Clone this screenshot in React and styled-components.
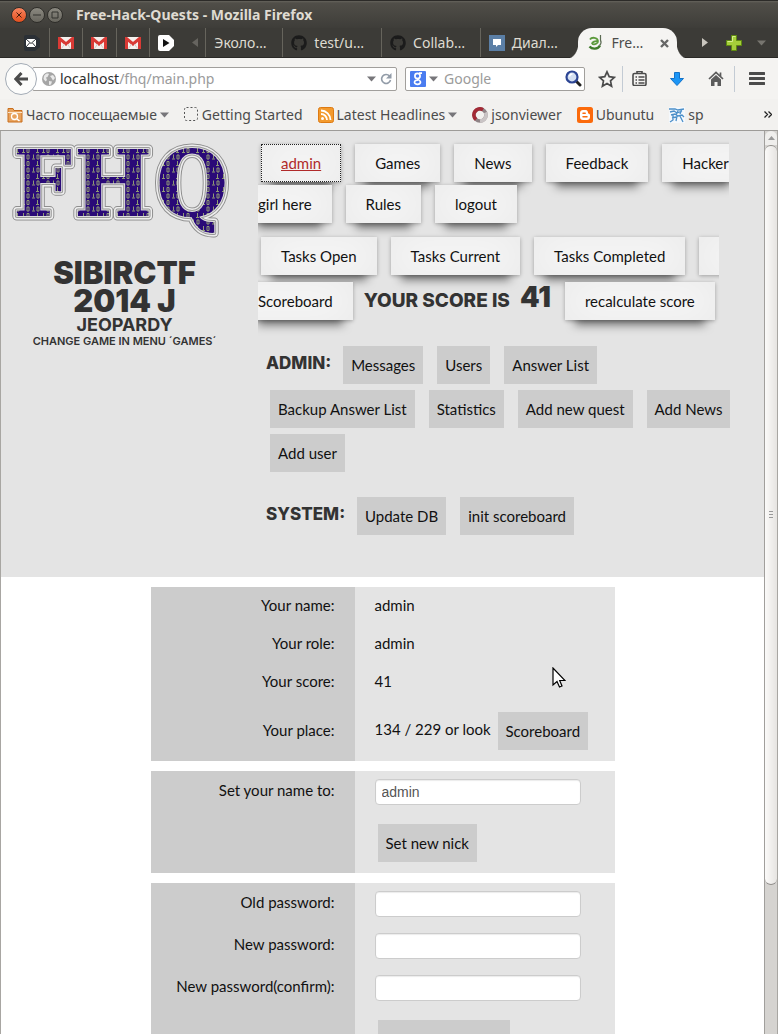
import React from "react";
import styled, { createGlobalStyle, css } from "styled-components";
import { FaGithub } from "react-icons/fa";

const uiFont = '"Noto Sans", "Open Sans", sans-serif';
const bodyFont = 'Lato, "Open Sans", sans-serif';
const displayFont = "Inter, sans-serif";

const GlobalStyle = createGlobalStyle`
  *, *::before, *::after { box-sizing: border-box; }
  body { margin: 0; overflow: hidden; background: #3c3b37; }
  button, input { font: inherit; }
`;

/* ---------- window frame ---------- */

const Window = styled.div`
  height: 100vh;
  display: flex;
  flex-direction: column;
  border-top: 1px solid #2c2b28;
  font: 14px/18px ${uiFont};
  color: #3c3c3c;
`;

const TitleBar = styled.header`
  flex: none;
  height: 27px;
  display: flex;
  align-items: center;
  gap: 2px;
  padding-left: 11px;
  background: linear-gradient(#65635c, #504e48 2px, #3e3d39);
`;

const Title = styled.h1`
  margin: 0 0 0 11px;
  font: bold 14px/18px ${uiFont};
  color: #dfdbd2;
`;

const WindowButton = styled.button`
  width: 16px;
  height: 16px;
  padding: 0;
  display: grid;
  place-items: center;
  border: 1px solid #2f2e2a;
  border-radius: 50%;
  background: ${(p) => (p.$close ? "linear-gradient(#f98560, #e3501f)" : "linear-gradient(#8b8980, #68665e)")};
`;

const TabStrip = styled.nav`
  flex: none;
  height: 30px;
  display: flex;
  padding-left: 16px;
  background: #3c3b37;
  border-bottom: 1px solid #2a2926;
`;

const PinnedTab = styled.button`
  width: 34px;
  padding: 0;
  display: grid;
  place-items: center;
  border: 0;
  border-right: 1px solid ${(p) => (p.$last ? "transparent" : "#66645c")};
  background: none;
`;

const StripButton = styled.button`
  width: ${(p) => p.$width}px;
  padding: 0;
  display: grid;
  place-items: center;
  border: 0;
  background: none;
`;

const Tab = styled.button`
  width: ${(p) => (p.$plain ? 78 : 100)}px;
  padding: 0 0 0 8px;
  display: flex;
  align-items: center;
  gap: 7px;
  border: 0;
  border-left: 1px solid #66645c;
  background: none;
  color: #dfdbd2;
  white-space: nowrap;
`;

const ActiveTab = styled.button`
  position: relative;
  width: 100px;
  height: 30px;
  margin: 0 10px 0 0;
  padding: 0 8px 0 10px;
  display: flex;
  align-items: center;
  gap: 7px;
  border: 0;
  border-radius: 14px 14px 0 0;
  background: #f5f4f2;
  color: #4c4c4c;
  &::before, &::after {
    content: "";
    position: absolute;
    bottom: 0;
    width: 11px;
    height: 16px;
  }
  &::before { right: 100%; background: radial-gradient(ellipse at 0 0, transparent 11px, #f5f4f2 12px); }
  &::after { left: 100%; background: radial-gradient(ellipse at 100% 0, transparent 11px, #f5f4f2 12px); }
  svg:last-child { margin-left: auto; }
`;

const Toolbar = styled.div`
  flex: none;
  height: 41px;
  display: flex;
  align-items: center;
  padding-left: 5px;
  background: #f4f3f1;
`;

const BackButton = styled.button`
  position: relative;
  flex: none;
  width: 32px;
  height: 32px;
  padding: 0;
  display: grid;
  place-items: center;
  border: 1px solid #a3abb5;
  border-radius: 50%;
  background: #fcfcfb;
`;

const Field = styled.div`
  height: 24px;
  display: flex;
  align-items: center;
  border: 1px solid #a19f9c;
  border-radius: 2px;
  background: #fff;
`;

const UrlField = styled(Field)`
  flex: 1;
  min-width: 0;
  margin: 0 8px 0 -5px;
  padding: 0 4px 0 9px;
  gap: 4px;
`;

const UrlText = styled.span`
  flex: 1;
  color: #9b9b9b;
  white-space: nowrap;
  b { font-weight: 400; color: #2e2e2e; }
`;

const SearchField = styled(Field)`
  flex: none;
  width: 180px;
  margin-right: 6px;
  padding: 0 2px 0 4px;
  gap: 3px;
  input {
    flex: 1;
    min-width: 0;
    padding: 0 3px;
    border: 0;
    outline: 0;
    background: none;
    &::placeholder { color: #9b9b9b; opacity: 1; }
  }
`;

const ToolButton = styled.button`
  flex: none;
  width: ${(p) => p.$width}px;
  height: 26px;
  padding: 0;
  display: grid;
  place-items: center;
  border: 0;
  border-left: 1px solid ${(p) => (p.$divided ? "#c3cbd4" : "transparent")};
  background: none;
`;

const Bookmarks = styled.nav`
  flex: none;
  height: 32px;
  display: flex;
  align-items: center;
  gap: 15px;
  padding: 0 6px 0 7px;
  background: #f2f1ef;
  border-bottom: 1px solid #9d9b98;
`;

const Bookmark = styled.a`
  display: flex;
  align-items: center;
  gap: 3px;
  color: #4c4c4c;
  text-decoration: none;
  white-space: nowrap;
  svg { flex: none; }
`;

const More = styled.button`
  margin-left: auto;
  padding: 0;
  display: grid;
  border: 0;
  background: none;
`;

/* ---------- viewport ---------- */

const Viewport = styled.div`
  position: relative;
  flex: 1;
  min-height: 0;
  display: flex;
  border: solid #a8a6a2;
  border-width: 0 1px;
`;

const Page = styled.main`
  flex: 1;
  min-width: 0;
  overflow: hidden;
  background: #fff;
  font: 15px/18px ${bodyFont};
  color: #111;
`;

const ScrollTrack = styled.div`
  flex: none;
  width: 13px;
  display: flex;
  flex-direction: column;
  background: #d5d3d0;
  border-left: 1px solid #a19f9c;
`;

const ScrollUp = styled.button`
  height: 14px;
  padding: 0;
  display: grid;
  place-items: center;
  border: 0;
  border-radius: 6px 6px 0 0;
  background: #efeeec;
`;

const ScrollThumb = styled.div`
  height: 82%;
  display: grid;
  place-items: center;
  border: solid #8f8d8a;
  border-width: 1px 0;
  border-radius: 6px;
  background: linear-gradient(90deg, #fbfaf9, #e6e4e1);
`;

const Header = styled.header`
  display: flex;
  min-height: 446px;
  background: #e4e4e4;
`;

const Brand = styled.section`
  flex: none;
  width: 257px;
  padding: 8px 15px 0 5px;
  text-align: center;
  color: #333;
  svg { display: block; margin: 0 0 20px 3px; }
`;

const GameName = styled.h2`
  margin: 0 30px;
  font: 900 31px/28px ${displayFont};
`;

const GameType = styled.p`
  margin: 0;
  font: 700 18px/20px ${displayFont};
`;

const GameHint = styled.p`
  margin: 0;
  font: 600 11px/12px ${displayFont};
`;

const Menus = styled.div`
  flex: 1;
  min-width: 0;
  padding-right: 18px;
`;

const MenuLines = styled.nav`
  padding-top: ${(p) => p.$top}px;
  line-height: ${(p) => p.$pitch}px;
  white-space: nowrap;
`;

const raised = css`
  background: #f8f8f8;
  box-shadow:
    0 15px 10px -10px rgba(0, 0, 0, 0.5),
    0 1px 4px rgba(0, 0, 0, 0.3),
    inset 0 0 40px rgba(0, 0, 0, 0.06);
`;

const MenuLink = styled.a`
  margin: 0 11px 0 3px;
  padding: 10px 20px;
  color: #111;
  text-decoration: none;
  ${raised}
  ${(p) =>
    p.$current &&
    css`
      color: #b02a2a;
      text-decoration: underline;
      outline: 1px dotted #222;
      outline-offset: -1px;
    `}
`;

const Score = styled.span`
  margin-right: 11px;
  font: 800 19px/20px ${displayFont};
  color: #333;
  b { margin-left: 6px; font-size: 28px; font-weight: 900; }
`;

const ToolGroup = styled.section`
  padding: ${(p) => p.$top}px 0 0 8px;
`;

const GroupTitle = styled.h3`
  display: inline-block;
  margin: 0 4px 0 0;
  font: 800 17px/20px ${displayFont};
  color: #333;
`;

const FlatButton = styled.button`
  height: 38px;
  margin: 3px 10px 3px 4px;
  padding: 0 8px;
  border: 0;
  background: #ccc;
  color: #111;
  vertical-align: middle;
`;

/* ---------- account panels ---------- */

const Panel = styled.table`
  width: 464px;
  max-width: 100%;
  margin: 10px auto 0;
  border-collapse: collapse;
  table-layout: fixed;
  th, td { height: 38px; padding: 0 20px 2px; white-space: nowrap; }
  th { width: 204px; background: #ccc; font-weight: 400; text-align: right; }
  td { background: #e4e4e4; }
`;

const FieldRow = styled.tr`
  && > * { height: 42px; }
  && > th { padding-bottom: 4px; }
  && > td { padding-bottom: 0; }
`;

const ActionRow = styled.tr`
  && > * { height: 60px; }
  && > td { padding-bottom: 0; }
  ${FlatButton} { margin-left: 3px; margin-right: 0; }
`;

const TextInput = styled.input`
  display: block;
  width: 206px;
  height: 26px;
  padding: 0 6px;
  border: 1px solid #ccc;
  border-radius: 4px;
  background: #fff;
  box-shadow: inset 0 1px 1px rgba(0, 0, 0, 0.08);
  font: 14px/20px "Liberation Sans", Arial, sans-serif;
  color: #555;
`;

const Pointer = styled.svg`
  position: absolute;
  left: 551px;
  top: 536px;
`;

/* ---------- icons ---------- */

const Caret = ({ color = "#77767a" }) => (
  <svg width="9" height="6" aria-hidden="true"><path d="M0 .5h9L4.500 5.500z" fill={color} /></svg>
);

const Gmail = () => (
  <svg width="16" height="12" viewBox="0 0 16 12" aria-hidden="true">
    <rect width="16" height="12" rx="1" fill="#f4f1ee" />
    <path d="M1.500 12V1.500L8 7l6.500-5.500V12" fill="none" stroke="#d93a35" strokeWidth="3" />
    <path d="M3.500 11.500 6.500 7M12.500 11.500 9.500 7" stroke="#d9c9c6" />
  </svg>
);

const MailTag = () => (
  <svg width="16" height="16" viewBox="0 0 16 16" aria-hidden="true">
    <path d="M2 0h9l5 4v8l-5 4H2a2 2 0 0 1-2-2V2a2 2 0 0 1 2-2z" fill="#2b3036" />
    <rect x="2" y="4" width="10" height="8" fill="#fff" />
    <path d="m2 4 5 4.500L12 4M2 12l3.500-4M12 12 8.500 8" fill="none" stroke="#2b3036" />
  </svg>
);

const PlayTag = () => (
  <svg width="16" height="16" viewBox="0 0 16 16" aria-hidden="true">
    <path d="M2 0h9l5 5v6l-5 5H2a2 2 0 0 1-2-2V2a2 2 0 0 1 2-2z" fill="#fff" />
    <path d="m5 4 6.500 4L5 12z" fill="#111" />
  </svg>
);

const Arrow = ({ left, color }) => (
  <svg width="6" height="9" aria-hidden="true"><path d={left ? "M6 0v9L0 4.500z" : "M0 0v9l6-4.500z"} fill={color} /></svg>
);

const Chat = () => (
  <svg width="16" height="16" aria-hidden="true">
    <rect width="16" height="16" fill="#5b7fa6" />
    <path d="M4 4h8v6H9l-2 2v-2H4z" fill="#fff" />
  </svg>
);

const SiteIcon = () => (
  <svg width="16" height="16" viewBox="0 0 16 16" fill="none" aria-hidden="true">
    <path d="M2 4.500C3.500 2 9.500 2 10 6c.2 2.500-3 4-6 3M4 9c0-2 3.500-3.500 6-2.500" stroke="#5c9a3c" strokeWidth="1.800" />
    <path d="M1.500 11.500C4 14.500 10 14.500 12 10.500" stroke="#3f7a2a" strokeWidth="2.400" />
    <path d="M12.500 0v5c1 2 .5 4-1 5.500" stroke="#5b6b53" strokeWidth="1.200" />
  </svg>
);

const Plus = () => (
  <svg width="16" height="16" aria-hidden="true">
    <path d="M5.500.5h5v5h5v5h-5v5h-5v-5h-5v-5h5z" fill="#a5cf3a" stroke="#5f8a10" />
    <path d="M6.500 1.500v5h-5M6.500 1.500h3" fill="none" stroke="#d6ec92" />
  </svg>
);

const Globe = () => (
  <svg width="14" height="14" viewBox="0 0 14 14" aria-hidden="true">
    <circle cx="7" cy="7" r="7" fill="#a5a5a5" />
    <path d="M2 4c2-3 4-2.500 5-2L5.500 5 4 5.500 5 8 3.500 9.500 1.500 7zM8 4l3-1 2 3-2 2.500L9.500 6zM7 9l3 .5-1 3-2 .5z" fill="#e9e9e9" />
  </svg>
);

const Reload = () => (
  <svg width="12" height="12" viewBox="0 0 12 12" aria-hidden="true">
    <path d="M9.500 3A4.500 4.500 0 1 0 10.500 7" fill="none" stroke="#929ca8" strokeWidth="1.600" />
    <path d="M11.500 0v5.500H6z" fill="#929ca8" />
  </svg>
);

const Magnifier = () => (
  <svg width="17" height="17" viewBox="0 0 17 17" fill="none" aria-hidden="true">
    <path d="m11 11 4 4" stroke="#222" strokeWidth="3" strokeLinecap="round" />
    <circle cx="7" cy="7" r="5.500" fill="#d3dff2" stroke="#2c4594" strokeWidth="2.200" />
    <path d="M4.500 6.500a3 3 0 0 1 3-2.500" stroke="#fff" strokeWidth="1.500" />
  </svg>
);

const Logo = () => {
  const letters = (
    <>
      <text x="12" y="82">F</text>
      <text x="73" y="82">H</text>
      <text x="155" y="82">Q</text>
    </>
  );
  return (
    <svg width="228" height="100" viewBox="8 5 228 100" role="img" aria-label="FHQ">
      <defs>
        <pattern id="bits" width="20" height="13" patternUnits="userSpaceOnUse">
          <rect width="20" height="13" fill="#2a0a78" />
          <g fill="none" stroke="#8f9a74" strokeWidth="1">
            <path d="M2.500 1v4M1 5.500h3M12.500 7.500v4M11 12h3M16.500 1v4M15 5.500h3" />
            <path d="M6 1.500h2v4H6zM6 8h2v4H6zM16 8h2v4h-2z" />
          </g>
        </pattern>
      </defs>
      <g fontFamily="DejaVu Serif Condensed, DejaVu Serif, serif" fontWeight="700" fontSize="92" strokeLinejoin="round">
        <g fill="#8f8f8f" stroke="#8f8f8f" strokeWidth="9">{letters}</g>
        <g fill="#eee" stroke="#eee" strokeWidth="7">{letters}</g>
        <g fill="#999" stroke="#999" strokeWidth="4">{letters}</g>
        <g fill="#eee" stroke="#ddd" strokeWidth="2">{letters}</g>
        <g fill="url(#bits)">{letters}</g>
      </g>
    </svg>
  );
};

export default function App() {
  return (
    <Window>
      <GlobalStyle />
      <TitleBar>
        <WindowButton $close aria-label="Close">
          <svg width="6" height="6"><path d="m.5.5 5 5m0-5-5 5" stroke="#4a1c0c" /></svg>
        </WindowButton>
        <WindowButton aria-label="Minimize">
          <svg width="8" height="6"><path d="M0 3h8" stroke="#33322e" /></svg>
        </WindowButton>
        <WindowButton aria-label="Maximize">
          <svg width="8" height="8"><path d="M1 1h6v6H1z" fill="none" stroke="#33322e" /></svg>
        </WindowButton>
        <Title>Free-Hack-Quests - Mozilla Firefox</Title>
      </TitleBar>

      <TabStrip>
        <PinnedTab aria-label="Mail"><MailTag /></PinnedTab>
        <PinnedTab aria-label="Gmail"><Gmail /></PinnedTab>
        <PinnedTab aria-label="Gmail"><Gmail /></PinnedTab>
        <PinnedTab aria-label="Gmail"><Gmail /></PinnedTab>
        <PinnedTab $last aria-label="Player"><PlayTag /></PinnedTab>
        <StripButton $width={22} aria-label="Scroll left"><Arrow left color="#66645f" /></StripButton>
        <Tab $plain>Эколо…</Tab>
        <Tab><FaGithub size={16} color="#1b1b1b" />test/u…</Tab>
        <Tab><FaGithub size={16} color="#1b1b1b" />Collab…</Tab>
        <Tab><Chat />Диал…</Tab>
        <ActiveTab>
          <SiteIcon />Fre…
          <svg width="9" height="9"><path d="m1 1 7 7m0-7-7 7" stroke="#666" strokeWidth="2.400" /></svg>
        </ActiveTab>
        <StripButton $width={36} aria-label="Scroll right"><Arrow color="#c9c6be" /></StripButton>
        <StripButton $width={22} aria-label="New tab"><Plus /></StripButton>
        <StripButton $width={34} aria-label="All tabs"><Caret color="#77756f" /></StripButton>
      </TabStrip>

      <Toolbar>
        <BackButton aria-label="Back">
          <svg width="14" height="14" viewBox="0 0 14 14"><path d="M7.500 1 1.800 7l5.700 6M2 7h12" fill="none" stroke="#4b4b4b" strokeWidth="3" /></svg>
        </BackButton>
        <UrlField>
          <Globe />
          <UrlText><b>localhost</b>/fhq/main.php</UrlText>
          <Caret />
          <Reload />
        </UrlField>
        <SearchField>
          <svg width="16" height="16" aria-hidden="true">
            <rect width="16" height="16" rx="1" fill="#4a7cf0" />
            <g fill="none" stroke="#fff" strokeWidth="1.700">
              <circle cx="7.500" cy="5" r="2.600" />
              <path d="M9 2.200h3M8 7.500c-1.500 1 2.500 1.500 2.500 3.500 0 3-6 3-6 .3C4.500 9.500 6.500 9 8 9.200" />
            </g>
          </svg>
          <Caret />
          <input aria-label="Search" placeholder="Google" />
          <Magnifier />
        </SearchField>
        <ToolButton $width={31} aria-label="Bookmark this page">
          <svg width="18" height="18" viewBox="0 0 18 18"><path d="m9 1.800 2.200 4.900 5.200.6-3.900 3.600 1.100 5.300L9 13.500l-4.600 2.700 1.100-5.300L1.600 7.300l5.200-.6z" fill="none" stroke="#4b4b4b" strokeWidth="1.700" /></svg>
        </ToolButton>
        <ToolButton $width={34} $divided aria-label="Show bookmarks">
          <svg width="15" height="15" viewBox="0 0 15 15" fill="none" stroke="#4b4b4b">
            <rect x="1" y="2.500" width="13" height="12" rx="1.500" strokeWidth="1.600" />
            <path d="M5 2V.5h5V2" strokeWidth="1.600" />
            <path d="M3.500 6h1.500M6.500 6h6M3.500 9h1.500M6.500 9h6M3.500 12h1.500M6.500 12h6" strokeWidth="1.300" />
          </svg>
        </ToolButton>
        <ToolButton $width={40} aria-label="Downloads">
          <svg width="14" height="14"><path d="M4.500.5h5v6h4L7 13.500.5 6.500h4z" fill="#1b95f5" stroke="#1272c9" /></svg>
        </ToolButton>
        <ToolButton $width={38} aria-label="Home">
          <svg width="16" height="15" viewBox="0 0 16 15">
            <path d="M1 8 8 1.500 15 8M12.500 1.500v4" fill="none" stroke="#5b5b5b" strokeWidth="1.700" />
            <path d="M3 8.500 8 4l5 4.500V15H9.500v-4h-3v4H3z" fill="#5b5b5b" />
          </svg>
        </ToolButton>
        <ToolButton $width={44} $divided aria-label="Menu">
          <svg width="16" height="13"><path d="M1 1.500h14M1 6.500h14M1 11.500h14" stroke="#4b4b4b" strokeWidth="3" strokeLinecap="round" /></svg>
        </ToolButton>
      </Toolbar>

      <Bookmarks>
        <Bookmark href="#">
          <svg width="16" height="16" viewBox="0 0 16 16" fill="none">
            <path d="M1 1.500h5l1 2h8v11.500H1z" fill="#e8a25c" stroke="#c96f1d" />
            <path d="M1 5.500h14" stroke="#fae3c8" />
            <circle cx="7.500" cy="9.500" r="3" stroke="#fff" strokeWidth="1.300" />
            <path d="m10 12 2.500 2" stroke="#fff" strokeWidth="1.600" />
          </svg>
          Часто посещаемые
          <Caret />
        </Bookmark>
        <Bookmark href="#">
          <svg width="15" height="15"><rect x=".5" y=".5" width="13" height="13" rx="2" fill="none" stroke="#555" strokeDasharray="2 2" /></svg>
          Getting Started
        </Bookmark>
        <Bookmark href="#">
          <svg width="16" height="16" viewBox="0 0 16 16" fill="none">
            <rect x=".5" y=".5" width="15" height="15" rx="2" fill="#f39a2d" stroke="#dd7a12" />
            <circle cx="4.500" cy="11.500" r="1.500" fill="#fff" />
            <path d="M3 7a6 6 0 0 1 6 6M3 3.500A9.500 9.500 0 0 1 12.500 13" stroke="#fff" strokeWidth="1.800" />
          </svg>
          Latest Headlines
          <Caret />
        </Bookmark>
        <Bookmark href="#">
          <svg width="16" height="16" viewBox="0 0 16 16" fill="none" strokeWidth="3.600">
            <circle cx="8" cy="8" r="6" stroke="#8f8386" />
            <path d="M4 12.500A6 6 0 0 1 11 2.800" stroke="#a32a35" />
            <path d="M8 14a6 6 0 0 0 5.500-8.500" stroke="#c9c4c5" />
          </svg>
          jsonviewer
        </Bookmark>
        <Bookmark href="#">
          <svg width="16" height="16" viewBox="0 0 16 16" fill="none">
            <rect width="16" height="16" rx="2.500" fill="#fb6a0b" />
            <path d="M6 3h2.500C10.500 3 11 4.500 11 6c0 1 2 .5 2 2v2c0 2-1.300 3-3 3H6c-2 0-3-1.200-3-3V6c0-2 1.300-3 3-3z" fill="#fff" />
            <path d="M6 6.200h2.200M6 9.800h4" stroke="#fb6a0b" strokeWidth="1.500" strokeLinecap="round" />
          </svg>
          Ubunutu
        </Bookmark>
        <Bookmark href="#">
          <svg width="16" height="16" viewBox="0 0 16 16" fill="none">
            <rect width="16" height="16" fill="#f4f8fc" />
            <path d="M0 2h6l3 1 6-1M1 5l4-1 3 2 5-2M2 8l4-1 3 2 4-1 2 2M4 8v5l-3 2M8 9l-1 5M11 9l3 6M9 4l-2 4M13 2l-2 5M3 11l4-1" stroke="#4b8fc9" strokeWidth="1.300" />
          </svg>
          sp
        </Bookmark>
        <More aria-label="More bookmarks">
          <svg width="8" height="7"><path d="m.5.500 3 3-3 3m4-6 3 3-3 3" fill="none" stroke="#222" strokeWidth="1.300" /></svg>
        </More>
      </Bookmarks>

      <Viewport>
        <Page>
          <Header>
            <Brand>
              <Logo />
              <GameName>SIBIRCTF 2014 J</GameName>
              <GameType>JEOPARDY</GameType>
              <GameHint>CHANGE GAME IN MENU ´GAMES´</GameHint>
            </Brand>
            <Menus>
              <MenuLines $top={12} $pitch={41}>
                <MenuLink $current href="#">admin</MenuLink>
                <MenuLink href="#">Games</MenuLink>
                <MenuLink href="#">News</MenuLink>
                <MenuLink href="#">Feedback</MenuLink>
                <MenuLink href="#">Hacker<br />girl here</MenuLink>
                <MenuLink href="#">Rules</MenuLink>
                <MenuLink href="#">logout</MenuLink>
              </MenuLines>
              <MenuLines $top={9} $pitch={45}>
                <MenuLink href="#">Tasks Open</MenuLink>
                <MenuLink href="#">Tasks Current</MenuLink>
                <MenuLink href="#">Tasks Completed</MenuLink>
                <MenuLink href="#"><br />Scoreboard</MenuLink>
                <Score>YOUR SCORE IS <b>41</b></Score>
                <MenuLink href="#">recalculate score</MenuLink>
              </MenuLines>
              <ToolGroup $top={19}>
                <GroupTitle>ADMIN:</GroupTitle>
                {" "}
                <FlatButton>Messages</FlatButton>
                <FlatButton>Users</FlatButton>
                <FlatButton>Answer List</FlatButton>
                <FlatButton>Backup Answer List</FlatButton>
                <FlatButton>Statistics</FlatButton>
                <FlatButton>Add new quest</FlatButton>
                <FlatButton>Add News</FlatButton>
                <FlatButton>Add user</FlatButton>
              </ToolGroup>
              <ToolGroup $top={19}>
                <GroupTitle>SYSTEM:</GroupTitle>
                {" "}
                <FlatButton>Update DB</FlatButton>
                <FlatButton>init scoreboard</FlatButton>
              </ToolGroup>
            </Menus>
          </Header>

          <Panel>
            <tbody>
              <tr><th scope="row">Your name:</th><td>admin</td></tr>
              <tr><th scope="row">Your role:</th><td>admin</td></tr>
              <tr><th scope="row">Your score:</th><td>41</td></tr>
              <ActionRow>
                <th scope="row">Your place:</th>
                <td>134 / 229 or look <FlatButton>Scoreboard</FlatButton></td>
              </ActionRow>
            </tbody>
          </Panel>

          <Panel>
            <tbody>
              <FieldRow>
                <th scope="row"><label htmlFor="nick">Set your name to:</label></th>
                <td><TextInput id="nick" defaultValue="admin" /></td>
              </FieldRow>
              <ActionRow><th /><td><FlatButton>Set new nick</FlatButton></td></ActionRow>
            </tbody>
          </Panel>

          <Panel>
            <tbody>
              <FieldRow>
                <th scope="row"><label htmlFor="old">Old password:</label></th>
                <td><TextInput id="old" type="password" /></td>
              </FieldRow>
              <FieldRow>
                <th scope="row"><label htmlFor="new">New password:</label></th>
                <td><TextInput id="new" type="password" /></td>
              </FieldRow>
              <FieldRow>
                <th scope="row"><label htmlFor="confirm">New password(confirm):</label></th>
                <td><TextInput id="confirm" type="password" /></td>
              </FieldRow>
              <ActionRow><th /><td><FlatButton>Change password</FlatButton></td></ActionRow>
            </tbody>
          </Panel>
        </Page>

        <ScrollTrack>
          <ScrollUp aria-label="Scroll up">
            <svg width="7" height="4"><path d="M0 4 3.500 0 7 4z" fill="#999" /></svg>
          </ScrollUp>
          <ScrollThumb>
            <svg width="4" height="8"><path d="M0 .5h4M0 3.500h4M0 6.500h4" stroke="#999" /></svg>
          </ScrollThumb>
        </ScrollTrack>

        <Pointer width="14" height="21" viewBox="0 0 14 21" aria-hidden="true">
          <path d="M1 1v17l4-3.500 2.500 5.500 2.500-1-2.300-5.500H13z" fill="#fff" stroke="#000" strokeWidth="1.200" />
        </Pointer>
      </Viewport>
    </Window>
  );
}
